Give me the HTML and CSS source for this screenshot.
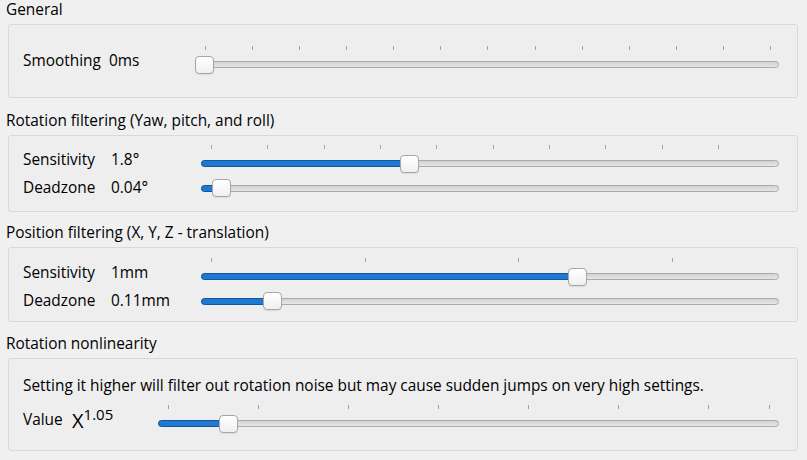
FILE: index.html
```html
<!DOCTYPE html>
<html>
<head>
<meta charset="utf-8">
<link rel="stylesheet" href="styles.css">
</head>
<body>
<div class="page">
  <section class="group group-general">
    <div class="title">General</div>
    <div class="box box-general">
      <div class="row cols-general">
        <span class="label">Smoothing</span>
        <span class="value">0ms</span>
        <div class="slider ticked">
          <div class="groove"></div>
          <span class="tick" style="left:10px"></span><span class="tick" style="left:57px"></span><span class="tick" style="left:104px"></span><span class="tick" style="left:151px"></span><span class="tick" style="left:198px"></span><span class="tick" style="left:245px"></span><span class="tick" style="left:292px"></span><span class="tick" style="left:340px"></span><span class="tick" style="left:387px"></span><span class="tick" style="left:434px"></span><span class="tick" style="left:481px"></span><span class="tick" style="left:528px"></span><span class="tick" style="left:575px"></span>
          <div class="handle" style="left:0px"></div>
        </div>
      </div>
    </div>
  </section>

  <section class="group group-rot">
    <div class="title">Rotation filtering (Yaw, pitch, and roll)</div>
    <div class="box box-rot">
      <div class="row cols-filter">
        <span class="label">Sensitivity</span>
        <span class="value">1.8°</span>
        <div class="slider ticked">
          <div class="groove"></div>
          <div class="fill" style="width:208px"></div>
          <span class="tick" style="left:10px"></span><span class="tick" style="left:66px"></span><span class="tick" style="left:123px"></span><span class="tick" style="left:179px"></span><span class="tick" style="left:235px"></span><span class="tick" style="left:292px"></span><span class="tick" style="left:348px"></span><span class="tick" style="left:404px"></span><span class="tick" style="left:461px"></span><span class="tick" style="left:517px"></span>
          <div class="handle" style="left:199px"></div>
        </div>
      </div>
      <div class="row cols-filter row-plain">
        <span class="label">Deadzone</span>
        <span class="value">0.04°</span>
        <div class="slider">
          <div class="groove"></div>
          <div class="fill" style="width:20px"></div>
          <div class="handle" style="left:11px"></div>
        </div>
      </div>
    </div>
  </section>

  <section class="group group-pos">
    <div class="title">Position filtering (X, Y, Z - translation)</div>
    <div class="box box-pos">
      <div class="row cols-filter">
        <span class="label">Sensitivity</span>
        <span class="value">1mm</span>
        <div class="slider ticked">
          <div class="groove"></div>
          <div class="fill" style="width:376px"></div>
          <span class="tick" style="left:10px"></span><span class="tick" style="left:164px"></span><span class="tick" style="left:317px"></span><span class="tick" style="left:471px"></span>
          <div class="handle" style="left:367px"></div>
        </div>
      </div>
      <div class="row cols-filter row-plain">
        <span class="label">Deadzone</span>
        <span class="value">0.11mm</span>
        <div class="slider">
          <div class="groove"></div>
          <div class="fill" style="width:71px"></div>
          <div class="handle" style="left:62px"></div>
        </div>
      </div>
    </div>
  </section>

  <section class="group group-nonlin">
    <div class="title">Rotation nonlinearity</div>
    <div class="box box-nonlin">
      <p class="desc">Setting it higher will filter out rotation noise but may cause sudden jumps on very high settings.</p>
      <div class="row cols-value">
        <span class="label">Value</span>
        <span class="value formula">X<sup>1.05</sup></span>
        <div class="slider ticked">
          <div class="groove"></div>
          <div class="fill" style="width:70px"></div>
          <span class="tick" style="left:10px"></span><span class="tick" style="left:100px"></span><span class="tick" style="left:190px"></span><span class="tick" style="left:280px"></span><span class="tick" style="left:370px"></span><span class="tick" style="left:460px"></span><span class="tick" style="left:550px"></span><span class="tick" style="left:611px"></span>
          <div class="handle" style="left:61px"></div>
        </div>
      </div>
    </div>
  </section>
</div>
</body>
</html>
```

FILE: styles.css
```css
* { box-sizing: border-box; }

html, body {
  margin: 0;
  padding: 0;
  background: #f0f0f0;
}

body {
  font-family: "Open Sans", "Noto Sans", "DejaVu Sans", sans-serif;
  font-size: 15.4px;
  color: #000;
  width: 807px;
  height: 460px;
  overflow: hidden;
}

.page {
  display: flex;
  flex-direction: column;
  padding-top: 1px;
}

.group {
  display: flex;
  flex-direction: column;
}

.group-rot { margin-top: 14px; }
.group-pos { margin-top: 12px; }
.group-nonlin { margin-top: 13px; }

.title {
  height: 18px;
  line-height: 18px;
  padding-left: 6px;
  margin-bottom: 5px;
  white-space: nowrap;
}

.box {
  margin-left: 8px;
  width: 790px;
  border: 1px solid #d9d9d9;
  border-radius: 3px;
  background: #eeeeee;
  padding: 0 18px 0 14px;
  display: flex;
  flex-direction: column;
}

.box-general { padding-top: 21px; padding-bottom: 22px; }
.box-rot { padding-top: 9px; padding-bottom: 14px; gap: 5px; }
.box-pos { padding-top: 10px; padding-bottom: 11px; gap: 5px; }
.box-nonlin { padding-top: 18px; padding-bottom: 16px; }

.row {
  display: grid;
  align-items: start;
}

.cols-general { grid-template-columns: 86px 86px 1fr; }
.cols-filter { grid-template-columns: 88px 90px 1fr; }
.cols-value { grid-template-columns: 49px 86px 1fr; }

.label, .value {
  line-height: 18px;
  padding-top: 6px;
  white-space: nowrap;
}

.row-plain .label, .row-plain .value {
  padding-top: 0;
}

.desc {
  margin: 0 0 10px 0;
  line-height: 18px;
  white-space: nowrap;
}

.formula {
  font-size: 20px;
  line-height: 18px;
  padding-top: 7px;
}

.formula sup {
  font-size: 15px;
  vertical-align: 0;
  position: relative;
  top: -8px;
}

.slider {
  position: relative;
  height: 18px;
}

.slider.ticked {
  height: 29px;
}

.groove {
  position: absolute;
  left: 0;
  right: 0;
  top: 6px;
  height: 7px;
  border: 1px solid #aaaaaa;
  border-radius: 4px;
  background: linear-gradient(#d2d2d2, #e6e6e6);
}

.fill {
  position: absolute;
  left: 0;
  top: 6px;
  height: 7px;
  border: 1px solid #14569c;
  border-radius: 4px;
  background: #1f78d1;
}

.ticked .groove,
.ticked .fill {
  top: 15px;
}

.tick {
  position: absolute;
  top: 0;
  width: 1px;
  height: 4px;
  background: #a2a2a2;
}

.handle {
  position: absolute;
  top: 0;
  width: 19px;
  height: 18px;
  border: 1px solid #a6a6a6;
  border-radius: 4px;
  background: linear-gradient(#ffffff, #f0f0f0);
  box-shadow: 0 1px 1px rgba(0, 0, 0, 0.08);
}

.ticked .handle {
  top: 10px;
}
```
